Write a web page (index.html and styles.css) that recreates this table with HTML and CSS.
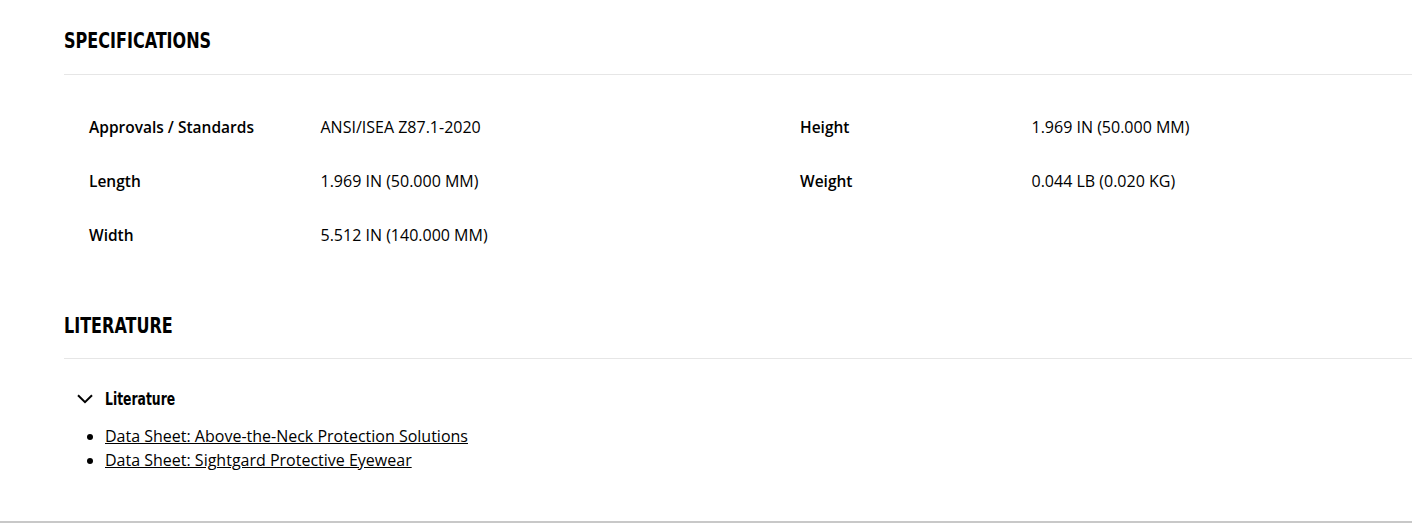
FILE: index.html
```html
<!DOCTYPE html>
<html>
<head>
<meta charset="utf-8">
<link rel="stylesheet" href="styles.css">
</head>
<body>
<div class="page">
  <section class="section">
    <h2 class="section-title"><span class="cond">SPECIFICATIONS</span></h2>
    <div class="spec-grid">
      <div class="spec"><div class="spec-label">Approvals / Standards</div><div class="spec-value">ANSI/ISEA Z87.1-2020</div></div>
      <div class="spec"><div class="spec-label">Height</div><div class="spec-value">1.969 IN (50.000 MM)</div></div>
      <div class="spec"><div class="spec-label">Length</div><div class="spec-value">1.969 IN (50.000 MM)</div></div>
      <div class="spec"><div class="spec-label">Weight</div><div class="spec-value">0.044 LB (0.020 KG)</div></div>
      <div class="spec"><div class="spec-label">Width</div><div class="spec-value">5.512 IN (140.000 MM)</div></div>
    </div>
  </section>
  <section class="section lit">
    <h2 class="section-title"><span class="cond">LITERATURE</span></h2>
    <div class="accordion">
      <div class="acc-head">
        <svg class="chev" width="16" height="10" viewBox="0 0 16 10"><path d="M1 1.2 L8 8.2 L15 1.2" fill="none" stroke="#000" stroke-width="2"/></svg>
        <span class="acc-title cond">Literature</span>
      </div>
      <ul class="lit-list">
        <li><a href="#">Data Sheet: Above-the-Neck Protection Solutions</a></li>
        <li><a href="#">Data Sheet: Sightgard Protective Eyewear</a></li>
      </ul>
    </div>
  </section>
</div>
<div class="footer-rule"></div>
</body>
</html>
```
FILE: styles.css
```css
html, body {
  margin: 0;
  padding: 0;
  background: #fff;
  overflow: hidden;
}
body {
  font-family: "Open Sans", "Liberation Sans", sans-serif;
  color: #000;
  height: 523px;
  display: flex;
  flex-direction: column;
}
.page {
  padding-left: 64px;
  flex: 1;
  min-width: 0;
}
.cond {
  display: inline-block;
  transform: scaleX(0.81);
  transform-origin: left center;
}
.section-title {
  margin: 0;
  font-family: "DejaVu Sans Condensed", "DejaVu Sans", sans-serif;
  font-weight: bold;
  font-size: 22px;
  letter-spacing: 0;
  line-height: 28px;
  padding-top: 27px;
  padding-bottom: 19px;
  border-bottom: 1px solid #e6e6e6;
}
.spec-grid {
  display: grid;
  grid-template-columns: 711px 1fr;
  padding: 42px 0 23px 25px;
}
.spec {
  display: flex;
  height: 54px;
  line-height: 20px;
}
.spec-label {
  width: 231.5px;
  flex-shrink: 0;
  font-weight: 600;
  font-size: 15.5px;
}
.spec-value {
  font-weight: 400;
  font-size: 16px;
}
.lit .section-title {
  padding-top: 10px;
  padding-bottom: 18px;
}
.accordion {
  padding-top: 28px;
}
.acc-head {
  display: flex;
  align-items: center;
  padding-left: 13px;
  height: 24px;
}
.chev {
  margin-right: 12px;
}
.acc-title {
  font-family: "DejaVu Sans Condensed", "DejaVu Sans", sans-serif;
  font-weight: bold;
  font-size: 17px;
}
.lit-list {
  margin: 13px 0 0;
  padding-left: 41px;
  font-size: 16px;
  line-height: 24px;
}
.lit-list a {
  color: #000;
  text-decoration: underline;
}
.footer-rule {
  height: 2px;
  background: #c8c8c8;
}
```
